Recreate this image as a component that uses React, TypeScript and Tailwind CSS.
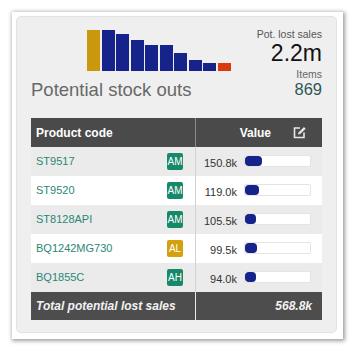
import React from "react";

const bars = [
  { h: "h-[41px]", c: "bg-[#c9980c]" },
  { h: "h-[41px]", c: "bg-[#15238a]" },
  { h: "h-[37px]", c: "bg-[#15238a]" },
  { h: "h-[31px]", c: "bg-[#15238a]" },
  { h: "h-[26px]", c: "bg-[#15238a]" },
  { h: "h-[26px]", c: "bg-[#15238a]" },
  { h: "h-[18px]", c: "bg-[#15238a]" },
  { h: "h-[11px]", c: "bg-[#15238a]" },
  { h: "h-[8px]", c: "bg-[#15238a]" },
  { h: "h-[8px]", c: "bg-[#dc3a0e]" },
];

const rows = [
  { code: "ST9517", badge: "AM", val: "150.8k", w: 17 },
  { code: "ST9520", badge: "AM", val: "119.0k", w: 14 },
  { code: "ST8128API", badge: "AM", val: "105.5k", w: 11 },
  { code: "BQ1242MG730", badge: "AL", val: "99.5k", w: 12 },
  { code: "BQ1855C", badge: "AH", val: "94.0k", w: 11 },
];

function EditIcon() {
  return (
    <svg width="14" height="13" viewBox="0 0 14 13" fill="none">
      <path d="M7 2H1.5v9.5H11V6.5" stroke="#e6e6e6" strokeWidth="1.6" />
      <path d="M5 8.6l.5-2.2L11 1l1.7 1.7-5.5 5.4z" fill="#e6e6e6" />
    </svg>
  );
}

export default function App() {
  return (
    <div
      className="w-[354px] h-[351px] bg-white pl-[12px] pt-[12px]"
      style={{ fontFamily: "'Liberation Sans', Arial, sans-serif" }}
    >
      <div className="w-[331px] h-[327px] bg-white pl-[4px] pt-[4px] shadow-[1px_1px_4px_1px_rgba(0,0,0,0.38)]">
        <div className="w-[321px] h-[317px] bg-[#efefef] rounded-[5px] border border-[#e2e2e2] px-[14px] pt-[12px]">
          <div className="h-[89px] flex justify-between">
            <div className="flex flex-col">
              <div className="h-[42px] ml-[56px] flex items-end gap-[1.5px]">
                {bars.map((b, i) => (
                  <div key={i} className={`w-[13px] ${b.h} ${b.c}`} />
                ))}
              </div>
              <div className="mt-[8px] text-[18.5px] leading-[22px] text-[#686868]">
                Potential stock outs
              </div>
            </div>
            <div className="flex flex-col items-end -mt-[1px]">
              <div className="text-[10.5px] leading-[12px] text-[#555555]">Pot. lost sales</div>
              <div className="text-[23px] leading-[26px] text-[#111111]">2.2m</div>
              <div className="mt-[2px] text-[10.5px] leading-[12px] text-[#666666]">Items</div>
              <div className="text-[16.5px] leading-[19px] text-[#2c5656]">869</div>
            </div>
          </div>

          <div className="w-[291px]">
            <div className="grid grid-cols-[164px_127px] h-[29px] bg-[#4a4a4a] text-white text-[12px] font-bold">
              <div className="flex items-center pl-[5px]">Product code</div>
              <div className="flex items-center justify-end border-l border-[#8a8a8a] pr-[15px]">
                <span>Value</span>
                <span className="ml-[22px] flex items-center">
                  <EditIcon />
                </span>
              </div>
            </div>
            {rows.map((r, i) => (
              <div
                key={r.code}
                className={`grid grid-cols-[164px_127px] h-[29px] ${i % 2 === 0 ? "bg-[#ebebeb]" : "bg-white"}`}
              >
                <div className="flex items-center justify-between pl-[5px] pr-[12px]">
                  <span className="text-[11px] text-[#2a8775]">{r.code}</span>
                  <span
                    className={`w-[16px] h-[17px] rounded-[2px] flex items-center justify-center text-[10px] text-white ${
                      r.badge === "AL" ? "bg-[#d3a00e]" : "bg-[#16896a]"
                    }`}
                  >
                    {r.badge}
                  </span>
                </div>
                <div className="flex items-center border-l border-[#d2d2d2]">
                  <span className="w-[41px] text-right text-[11px] text-[#333333] mt-[3px]">{r.val}</span>
                  <div className="ml-[7px] w-[67px] h-[12px] bg-white border border-[#e4e4e4] rounded-[2px] mb-[2px] flex items-stretch">
                    <div className="bg-[#15238a] rounded-[4px]" style={{ width: `${r.w}px` }} />
                  </div>
                </div>
              </div>
            ))}
            <div className="grid grid-cols-[164px_127px] h-[28px] bg-[#4d4d4d] text-[#f2f2f2] text-[12px] font-bold italic">
              <div className="flex items-center pl-[5px]">Total potential lost sales</div>
              <div className="flex items-center justify-end border-l border-[#e8e8e8] pr-[10px]">568.8k</div>
            </div>
          </div>
        </div>
      </div>
    </div>
  );
}
